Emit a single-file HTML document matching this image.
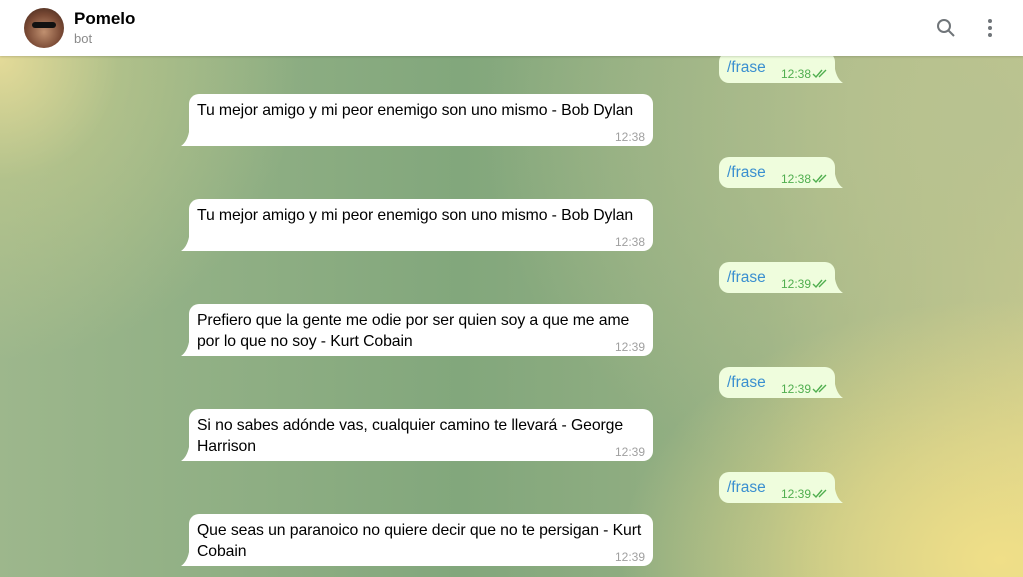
<!DOCTYPE html>
<html><head><meta charset="utf-8"><style>
*{margin:0;padding:0;box-sizing:border-box}
body{width:1023px;height:577px;overflow:hidden;position:relative;font-family:"Liberation Sans",sans-serif;
background:
radial-gradient(ellipse 380px 260px at 1000px 560px,#f0df88 0%,rgba(240,223,136,0.6) 45%,rgba(240,223,136,0) 100%),
radial-gradient(ellipse 300px 300px at 0px 60px,#e3da98 0%,rgba(200,205,140,0.5) 40%,rgba(170,190,140,0) 100%),
radial-gradient(ellipse 500px 400px at 980px 120px,#b8c290 0%,rgba(184,194,144,0) 100%),
linear-gradient(90deg,#9db78c 0%,#82a77c 45%,#98b184 75%,#c9c98c 100%);}
.hdr{position:absolute;left:0;top:0;width:1023px;height:56px;background:#fff;box-shadow:0 1px 2px rgba(0,0,0,.15);z-index:5}
.av{position:absolute;left:24px;top:8px;width:40px;height:40px;border-radius:50%;background:radial-gradient(circle at 50% 60%,#c09070 0,#7a4a35 55%,#3a2218 100%);overflow:hidden}
.av:after{content:"";position:absolute;left:8px;top:14px;width:24px;height:6px;background:#111;border-radius:3px}
.name{position:absolute;left:74px;top:9px;font-size:17px;font-weight:bold;color:#000}
.sub{position:absolute;left:74px;top:31px;font-size:13px;color:#8a8a8a}
.r{position:absolute;left:189px;width:464px;height:52px;background:#fff;border-radius:10px 10px 10px 0;font-size:15.8px;color:#000;padding:6px 8px;line-height:21px;letter-spacing:-0.1px}
.r:before{content:"";position:absolute;left:-8px;bottom:0;width:12px;height:14px;background:#fff;clip-path:path("M12 0 L12 14 L0 14 Q6 10 8 0 Z")}
.t{position:absolute;right:8px;bottom:2px;font-size:12px;line-height:14px;color:#a0a0a0;letter-spacing:0}
.s{position:absolute;left:719px;width:116px;height:31px;background:#effddd;border-radius:10px 10px 0 10px;font-size:15.5px;color:#3a8fd0}
.s:after{content:"";position:absolute;right:-8px;bottom:0;width:12px;height:14px;background:#effddd;clip-path:path("M0 0 L0 14 L12 14 Q6 10 4 0 Z")}
.s .c{position:absolute;left:8px;top:7px}
.s .st{position:absolute;left:62px;top:15px;font-size:12px;color:#4fae4e}
.s svg{position:absolute;left:93px;top:17px}
</style></head><body>
<div class="hdr"><div class="av"></div><div class="name">Pomelo</div><div class="sub">bot</div>
<svg style="position:absolute;left:935px;top:17px" width="22" height="22" viewBox="0 0 22 22"><circle cx="9" cy="9" r="6" fill="none" stroke="#707579" stroke-width="2"/><path d="M13.5 13.5L19 19" stroke="#707579" stroke-width="2"/></svg>
<svg style="position:absolute;left:986px;top:18px" width="8" height="20"><circle cx="4" cy="3" r="2" fill="#707579"/><circle cx="4" cy="10" r="2" fill="#707579"/><circle cx="4" cy="17" r="2" fill="#707579"/></svg>
</div>

<div class="s" style="top:52px"><span class="c">/frase</span><span class="st">12:38</span><svg width="18" height="10"><path d="M1 5l3 3 6-7M7 8l7-7" fill="none" stroke="#4fae4e" stroke-width="1.4"/></svg></div>
<div class="r" style="top:94px">Tu mejor amigo y mi peor enemigo son uno mismo - Bob Dylan<span class="t">12:38</span></div>

<div class="s" style="top:157px"><span class="c">/frase</span><span class="st">12:38</span><svg width="18" height="10"><path d="M1 5l3 3 6-7M7 8l7-7" fill="none" stroke="#4fae4e" stroke-width="1.4"/></svg></div>
<div class="r" style="top:199px">Tu mejor amigo y mi peor enemigo son uno mismo - Bob Dylan<span class="t">12:38</span></div>

<div class="s" style="top:262px"><span class="c">/frase</span><span class="st">12:39</span><svg width="18" height="10"><path d="M1 5l3 3 6-7M7 8l7-7" fill="none" stroke="#4fae4e" stroke-width="1.4"/></svg></div>
<div class="r" style="top:304px">Prefiero que la gente me odie por ser quien soy a que me ame<br>por lo que no soy - Kurt Cobain<span class="t">12:39</span></div>

<div class="s" style="top:367px"><span class="c">/frase</span><span class="st">12:39</span><svg width="18" height="10"><path d="M1 5l3 3 6-7M7 8l7-7" fill="none" stroke="#4fae4e" stroke-width="1.4"/></svg></div>
<div class="r" style="top:409px">Si no sabes adónde vas, cualquier camino te llevará - George<br>Harrison<span class="t">12:39</span></div>

<div class="s" style="top:472px"><span class="c">/frase</span><span class="st">12:39</span><svg width="18" height="10"><path d="M1 5l3 3 6-7M7 8l7-7" fill="none" stroke="#4fae4e" stroke-width="1.4"/></svg></div>
<div class="r" style="top:514px">Que seas un paranoico no quiere decir que no te persigan - Kurt<br>Cobain<span class="t">12:39</span></div>
</body></html>
